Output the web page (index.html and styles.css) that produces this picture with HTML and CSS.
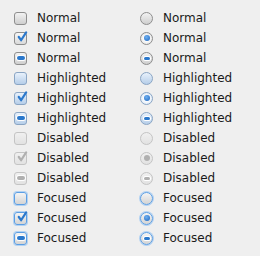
FILE: index.html
```html
<!DOCTYPE html>
<html lang="en">
<head>
    <meta charset="UTF-8">
    <title>Check states</title>
    <link rel="stylesheet" href="styles.css">
</head>
<body>
<div class="grid">
    <div class="item"><span class="box"></span>Normal</div>
    <div class="item"><span class="radio"></span>Normal</div>
    <div class="item"><span class="box on"><svg viewBox="0 0 13 13"><path d="M3 6.5 L5.5 10 L11 1.5"/></svg></span>Normal</div>
    <div class="item"><span class="radio on"></span>Normal</div>
    <div class="item"><span class="box mixed"><i></i></span>Normal</div>
    <div class="item"><span class="radio mixed"><i></i></span>Normal</div>

    <div class="item hi"><span class="box"></span>Highlighted</div>
    <div class="item hi"><span class="radio"></span>Highlighted</div>
    <div class="item hi"><span class="box on"><svg viewBox="0 0 13 13"><path d="M3 6.5 L5.5 10 L11 1.5"/></svg></span>Highlighted</div>
    <div class="item hi"><span class="radio on"></span>Highlighted</div>
    <div class="item hi"><span class="box mixed"><i></i></span>Highlighted</div>
    <div class="item hi"><span class="radio mixed"><i></i></span>Highlighted</div>

    <div class="item off"><span class="box"></span>Disabled</div>
    <div class="item off"><span class="radio"></span>Disabled</div>
    <div class="item off"><span class="box on"><svg viewBox="0 0 13 13"><path d="M3 6.5 L5.5 10 L11 1.5"/></svg></span>Disabled</div>
    <div class="item off"><span class="radio on"></span>Disabled</div>
    <div class="item off"><span class="box mixed"><i></i></span>Disabled</div>
    <div class="item off"><span class="radio mixed"><i></i></span>Disabled</div>

    <div class="item fo"><span class="box"></span>Focused</div>
    <div class="item fo"><span class="radio"></span>Focused</div>
    <div class="item fo"><span class="box on"><svg viewBox="0 0 13 13"><path d="M3 6.5 L5.5 10 L11 1.5"/></svg></span>Focused</div>
    <div class="item fo"><span class="radio on"></span>Focused</div>
    <div class="item fo"><span class="box mixed"><i></i></span>Focused</div>
    <div class="item fo"><span class="radio mixed"><i></i></span>Focused</div>
</div>
</body>
</html>
```

FILE: styles.css
```css
*{
    margin: 0;
    padding: 0;
    box-sizing: border-box;
}
body{
    width: 260px;
    height: 256px;
    overflow: hidden;
    background: #efefef;
    font-family: "DejaVu Sans", sans-serif;
    font-size: 12px;
    color: #1a1a1a;
}
.grid{
    display: grid;
    grid-template-columns: 126px 1fr;
    grid-auto-rows: 20px;
    padding: 8px 0 0 14px;
}
.item{
    display: flex;
    align-items: center;
    gap: 10px;
    height: 20px;
}
.box,.radio{
    position: relative;
    flex: none;
    width: 13px;
    height: 13px;
    border: 1px solid #8e8e8e;
    background: linear-gradient(#f2f2f2, #cfcfcf);
    display: flex;
    align-items: center;
    justify-content: center;
}
.box{
    border-radius: 3px;
}
.radio{
    border-radius: 50%;
}
.box svg{
    position: absolute;
    left: 1px;
    top: -2px;
    width: 12px;
    height: 12px;
    overflow: visible;
}
.box svg path{
    fill: none;
    stroke: #2a78cc;
    stroke-width: 2.4;
    stroke-linecap: round;
    stroke-linejoin: round;
}
.box.on{
    background: linear-gradient(#f6f6f6, #dadada);
}
.mixed i{
    display: block;
    width: 8px;
    height: 4px;
    border-radius: 2px;
    background: #2a78cc;
    box-shadow: 0 0 0 1px #ffffff;
}
.radio.mixed i{
    width: 6px;
    height: 3px;
}
.radio.on::after{
    content: "";
    width: 6px;
    height: 6px;
    border-radius: 50%;
    background: radial-gradient(circle at 40% 35%, #6fb0f0, #1a64c0);
}
.radio.on{
    background: radial-gradient(circle, #ffffff 30%, #dadada);
}
.hi .box,.hi .radio{
    border-color: #8aa5c4;
    background: linear-gradient(#e8f1fb, #b6cee9);
}
.hi .radio.on{
    background: radial-gradient(circle, #ffffff 30%, #cfe0f3);
}
.off .box,.off .radio{
    border-color: #c4c4c4;
    background: linear-gradient(#f0f0f0, #e2e2e2);
}
.off .box svg path{
    stroke: #b0b0b0;
}
.off .mixed i{
    background: #b0b0b0;
}
.off .radio.on::after{
    background: #b0b0b0;
}
.fo .box,.fo .radio{
    border-color: #5b9ee4;
    box-shadow: 0 0 0 1px #b3d2f2;
    background: linear-gradient(#f4f4f4, #d4d4d4);
}
```
